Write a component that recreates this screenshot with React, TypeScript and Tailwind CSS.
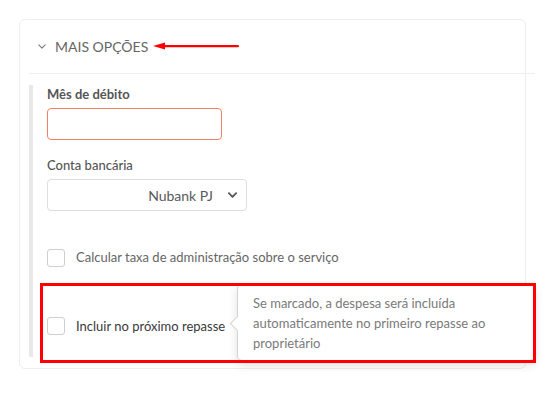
import React from 'react'

const Chevron = ({ className, strokeWidth = 1.5 }: { className?: string; strokeWidth?: number }) => (
  <svg viewBox="0 0 10 6" className={className} fill="none">
    <path d="M1 1l4 4 4-4" stroke="currentColor" strokeWidth={strokeWidth} strokeLinecap="round" strokeLinejoin="round" />
  </svg>
)

const Checkbox = () => (
  <span className="block w-[18px] h-[18px] shrink-0 rounded-[3px] border border-[#cfcfcf] bg-white" />
)

export default function App() {
  return (
    <div className="w-[549px] h-[411px] bg-white pt-[19px] pl-[19px] font-['Lato','Liberation_Sans',sans-serif]">
      <div className="relative w-[507px] h-[350px] rounded-md border border-[#eceef2] bg-white">
        {/* header */}
        <div className="h-[53px] flex items-center pl-[18px]">
          <Chevron className="w-[8px] h-[5px] text-[#777]" strokeWidth={1.3} />
          <span className="ml-[9px] text-[14px] text-[#666]">MAIS OPÇÕES</span>
          <svg width="86" height="8" viewBox="0 0 86 8" className="ml-[5px] mt-[-1px]">
            <path d="M0 4L12 0.5V7.5Z" fill="#ff0000" />
            <rect x="10" y="3" width="76" height="2.2" rx="1" fill="#ff0000" />
          </svg>
        </div>
        <div className="ml-[9px] -mr-[10px] border-t border-[#eceef0]" />

        {/* body */}
        <div className="ml-[9px] mt-[11px] h-[272px] border-l-4 border-[#e8e8e8] pl-[14px] pt-[1px] text-[13px]">
          <div className="font-bold text-[#555] leading-[16px]">Mês de débito</div>
          <div className="mt-[6px] w-[175px] h-[32px] rounded-[4px] border border-[#f47f60] bg-white" />

          <div className="mt-[17px] font-medium text-[#555] leading-[16px]">Conta bancária</div>
          <div className="mt-[6px] w-[200px] h-[32px] rounded-[4px] border border-[#dedede] bg-white flex items-center justify-end pr-[9px]">
            <span className="text-[14px] text-[#595959]">Nubank PJ</span>
            <Chevron className="ml-[15px] w-[9px] h-[6px] text-[#555]" strokeWidth={2} />
          </div>

          <div className="mt-[37px] flex items-center">
            <Checkbox />
            <span className="ml-[11px] text-[#666]">Calcular taxa de administração sobre o serviço</span>
          </div>

          <div className="mt-[49px] flex items-center">
            <Checkbox />
            <span className="ml-[11px] text-[#3a3a3a]">Incluir no próximo repasse</span>
          </div>
        </div>

        {/* tooltip */}
        <div className="absolute left-[217px] top-[264px] w-[298px] h-[77px] rounded-[5px] border border-[#d4d4d4] bg-white shadow-[0_4px_10px_rgba(0,0,0,0.12)] pl-[15px] pr-[10px] pt-[8px] text-[13px] leading-[20px] text-[#7a7a7a]">
          <span className="absolute left-[-6px] top-[33px] w-[11px] h-[11px] rotate-45 border-l border-b border-[#d4d4d4] bg-white" />
          <p className="relative">
            Se marcado, a despesa será incluída
            <br />
            automaticamente no primeiro repasse ao
            <br />
            proprietário
          </p>
        </div>

        {/* annotation box */}
        <div className="absolute left-[20px] top-[263px] w-[496px] h-[80px] border-[3px] border-[#ff0000]" />
      </div>
    </div>
  )
}
